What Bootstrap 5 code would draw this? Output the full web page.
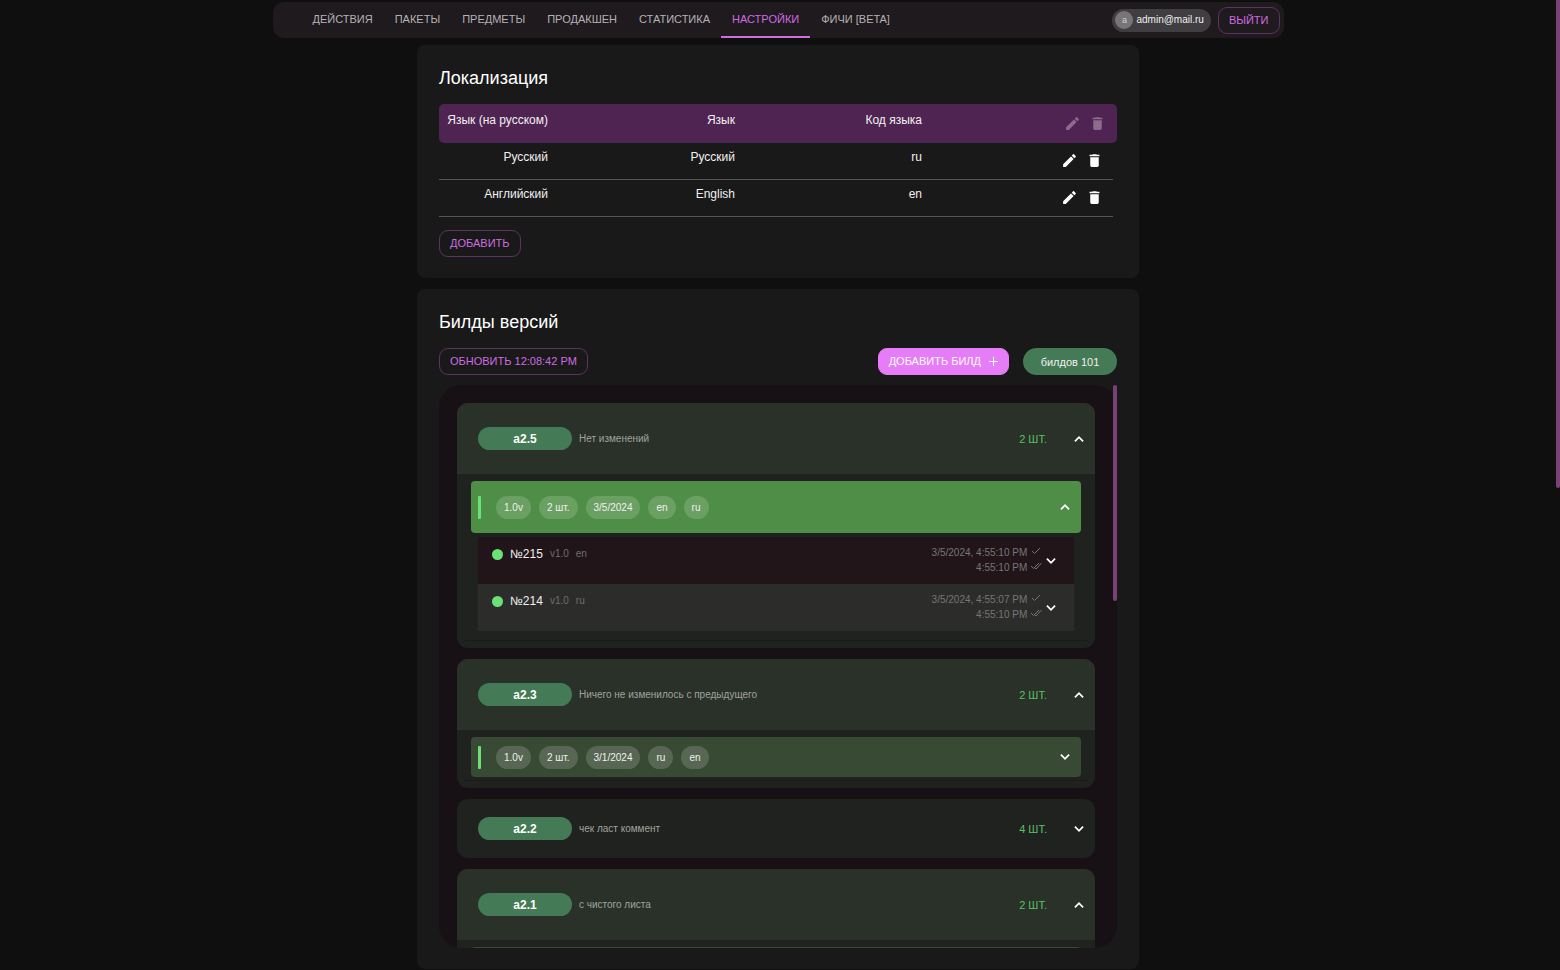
<!DOCTYPE html>
<html lang="ru" data-bs-theme="dark">
<head>
<meta charset="utf-8">
<meta name="viewport" content="width=device-width, initial-scale=1">
<title>Настройки</title>
<link href="https://cdn.jsdelivr.net/npm/bootstrap@5.3.0/dist/css/bootstrap.min.css" rel="stylesheet">
<style>
  :root { --accent: #d06be0; --ok: #6ae279; }
  body { background: #0f0f0f; color: #f0f0f0; font: 11px/16px "Liberation Sans", Arial, sans-serif; padding-right: 4px; }
  button { font-family: inherit; }
  .page-thumb { top: 0; right: 0; width: 4px; height: 488px; background: #7a4078; border-radius: 0 0 2px 2px; }

  .topbar { max-width: 1011px; height: 36px; margin-top: 2px; padding: 0 4px 0 29px; background: #1f1a1e; border-radius: 11px; }
  .topbar .nav-link { padding: 0 11px; height: 36px; line-height: 35px; font-size: 11px; color: #b5b2b4; border-bottom: 2px solid transparent; border-radius: 0; }
  .topbar .nav-link.active { color: var(--accent); border-color: var(--accent); }
  .user-chip { height: 23px; margin-right: 7px; padding: 0 7px 0 3px; gap: 3px; background: #403e40; border-radius: 12px; font-size: 10px; color: #f0f0f0; }
  .user-letter { width: 18px; height: 18px; border-radius: 50%; background: #777577; color: #d0d0d0; font-size: 9px; }

  .btn-line, .btn-fill { height: 27px; padding: 0 10px; font-size: 11px; line-height: 25px; border-radius: 9px; }
  .btn-line { color: var(--accent); border: 1px solid #5c3361; }
  .btn-line:hover { color: #e77cf8; border-color: var(--accent); }
  .btn-fill, .btn-fill:hover { color: #fff; background: #e77cf8; border: 1px solid #e77cf8; }
  .toolbar { gap: 14px; margin-bottom: 10px; }
  .total { width: 94px; height: 27px; background: #447a55; border-radius: 14px; }

  .pane { max-width: 722px; background: #191919; border-radius: 8px; padding: 22px 22px 21px; margin-top: 7px; }
  .pane + .pane { margin-top: 11px; }
  .pane h2 { font-size: 18px; line-height: 22px; margin: 0 0 15px; font-weight: 400; }

  .langs { table-layout: fixed; width: 100%; margin-bottom: 13px; font-size: 12px; text-align: right; }
  .langs th, .langs td { font-weight: 400; padding: 6px 8px 0 0; vertical-align: top; height: 37px; }
  .langs th { background: #502452; height: 39px; padding-top: 8px; white-space: nowrap; }
  .langs th:first-child { border-radius: 5px 0 0 5px; width: 117px; }
  .langs th:last-child { border-radius: 0 5px 5px 0; padding: 11px 11px 0 0; }
  .langs td { background: linear-gradient(#555, #555) 0 100% / 100% 1px no-repeat; }
  .langs td:last-child { background-size: calc(100% - 4px) 1px; padding: 9px 14px 0 0; }
  .icon-btn { border: 0; padding: 0; background: none; color: #fff; width: 17px; height: 17px; line-height: 0; margin-left: 8px; }
  .icon-btn:disabled { color: #8c6b8d; }
  .icon-btn svg { width: 17px; height: 17px; fill: currentColor; }

  .builds { height: 58vh; padding: 18px 22px 18px 18px; background: #171115; border-radius: 22px; overflow-y: auto; scrollbar-width: none; }
  .builds::-webkit-scrollbar { display: none; }
  .list-thumb { top: 0; right: 0; width: 4px; height: 216px; border-radius: 2px; background: #7a4078; }
  .version { background: #20221f; border-radius: 11px; overflow: hidden; margin-bottom: 11px; }
  .version-head { height: 59px; padding: 0 9px 0 21px; border: 0; background: none; color: inherit; font-size: 11px; }
  .version-head.opened { height: 71px; background: #293128; }
  .version-name { width: 94px; height: 23px; border-radius: 12px; background: #447a55; color: #fff; font-size: 12px; font-weight: 700; }
  .note { margin-left: 7px; color: #a0a39f; font-size: 10px; }
  .amount { color: #57c463; margin-right: 25px; }
  .chev { width: 14px; height: 14px; fill: none; stroke: #fff; stroke-width: 3; }
  .version-body { padding: 7px 14px 0; }
  .version-body::after { content: ""; display: block; height: 1px; margin: 0 -7px 7px; background: #1a1b19; }
  .rev { height: 40px; margin-bottom: 3px; padding: 0 9px 0 7px; gap: 8px; border: 0; border-radius: 4px; background: #384a33; color: #f0f0f0; font-size: 10px; }
  .rev.opened { height: 52px; margin-bottom: 4px; background: #4f8e46; }
  .rev-bar { width: 3px; height: 23px; margin-right: 7px; background: var(--ok); border-radius: 1px; }
  .pill { height: 23px; padding: 0 8px; border-radius: 12px; background: rgba(255, 255, 255, .16); line-height: 23px; }
  .build-row { height: 47px; margin: 0 7px; padding: 8px 16px 0 14px; background: #2c2d2b; }
  .build-row.fresh { background: #211519; }
  .build-row:last-child { margin-bottom: 9px; }
  .build-info { margin-top: 1px; }
  .dot { width: 11px; height: 11px; border-radius: 50%; background: var(--ok); margin-right: 7px; }
  .build-no { font-size: 12px; }
  .dim { color: #6f6d6d; margin-left: 7px; font-size: 10px; }
  .stamps { color: #777575; font-size: 10px; line-height: 15px; text-align: right; }
  .tick { width: 12px; height: 10px; fill: none; stroke: #777575; stroke-width: 1; vertical-align: 0; }
  .build-toggle { border: 0; background: none; padding: 0; line-height: 0; margin: 9px 0 0 2px; }
</style>
</head>
<body>
<svg class="d-none">
  <symbol id="pencil" viewBox="0 0 24 24"><path d="M3 17.25V21h3.75L17.81 9.94l-3.75-3.75L3 17.25zM20.71 7.04a1 1 0 0 0 0-1.41l-2.34-2.34a1 1 0 0 0-1.41 0l-1.83 1.83 3.75 3.75 1.83-1.83z"/></symbol>
  <symbol id="bin" viewBox="0 0 24 24"><path d="M6 19c0 1.100.9 2 2 2h8c1.100 0 2-.9 2-2V7.500H6V19zM19 4h-3.500l-1-1h-5l-1 1H5v2h14V4z"/></symbol>
  <symbol id="up" viewBox="0 0 24 24"><path d="M5 16l7-7 7 7"/></symbol>
  <symbol id="down" viewBox="0 0 24 24"><path d="M5 8l7 7 7-7"/></symbol>
  <symbol id="tick1" viewBox="0 0 12 10"><path d="M2 5l2.500 2.500L10 2"/></symbol>
  <symbol id="tick2" viewBox="0 0 12 10"><path d="M1 5l2.500 2.500L9 2M4.500 6.500L6 8l5.500-6"/></symbol>
</svg>
<div class="page-thumb position-fixed"></div>

<header class="topbar mx-auto d-flex align-items-center">
  <nav class="nav flex-nowrap me-auto">
    <a class="nav-link" href="#">ДЕЙСТВИЯ</a>
    <a class="nav-link" href="#">ПАКЕТЫ</a>
    <a class="nav-link" href="#">ПРЕДМЕТЫ</a>
    <a class="nav-link" href="#">ПРОДАКШЕН</a>
    <a class="nav-link" href="#">СТАТИСТИКА</a>
    <a class="nav-link active" href="#" aria-current="page">НАСТРОЙКИ</a>
    <a class="nav-link" href="#">ФИЧИ [BETA]</a>
  </nav>
  <span class="user-chip d-flex align-items-center"><span class="user-letter d-flex align-items-center justify-content-center">a</span>admin@mail.ru</span>
  <button type="button" class="btn btn-line">ВЫЙТИ</button>
</header>

<main>
  <section class="pane mx-auto">
    <h2>Локализация</h2>
    <table class="langs">
      <thead>
        <tr><th>Язык (на русском)</th><th>Язык</th><th>Код языка</th><th><div class="d-flex justify-content-end"><button class="icon-btn" disabled aria-label="Изменить"><svg><use href="#pencil"/></svg></button><button class="icon-btn" disabled aria-label="Удалить"><svg><use href="#bin"/></svg></button></div></th></tr>
      </thead>
      <tbody>
        <tr><td>Русский</td><td>Русский</td><td>ru</td><td><div class="d-flex justify-content-end"><button class="icon-btn" aria-label="Изменить"><svg><use href="#pencil"/></svg></button><button class="icon-btn" aria-label="Удалить"><svg><use href="#bin"/></svg></button></div></td></tr>
        <tr><td>Английский</td><td>English</td><td>en</td><td><div class="d-flex justify-content-end"><button class="icon-btn" aria-label="Изменить"><svg><use href="#pencil"/></svg></button><button class="icon-btn" aria-label="Удалить"><svg><use href="#bin"/></svg></button></div></td></tr>
      </tbody>
    </table>
    <button type="button" class="btn btn-line d-block">ДОБАВИТЬ</button>
  </section>

  <section class="pane mx-auto">
    <h2>Билды версий</h2>
    <div class="toolbar d-flex align-items-center">
      <button type="button" class="btn btn-line me-auto">ОБНОВИТЬ 12:08:42 PM</button>
      <button type="button" class="btn btn-fill d-flex align-items-center gap-2">ДОБАВИТЬ БИЛД <svg width="9" height="9" viewBox="0 0 9 9" stroke="#fff"><path d="M4.500 0v9M0 4.500h9"/></svg></button>
      <span class="total d-flex align-items-center justify-content-center">билдов 101</span>
    </div>
    <div class="position-relative">
      <div class="builds">
        <article class="version">
          <button class="version-head opened w-100 d-flex align-items-center" data-bs-toggle="collapse" data-bs-target="#v25"><span class="version-name d-flex align-items-center justify-content-center">a2.5</span><span class="note me-auto">Нет изменений</span><span class="amount">2 ШТ.</span><svg class="chev"><use href="#up"/></svg></button>
          <div id="v25" class="collapse show"><div class="version-body">
            <button class="rev opened w-100 d-flex align-items-center"><span class="rev-bar"></span><span class="pill">1.0v</span><span class="pill">2 шт.</span><span class="pill">3/5/2024</span><span class="pill">en</span><span class="pill">ru</span><svg class="chev ms-auto"><use href="#up"/></svg></button>
            <div>
              <div class="build-row fresh d-flex align-items-start">
                <div class="build-info d-flex align-items-center me-auto"><span class="dot"></span><span class="build-no">№215</span><span class="dim">v1.0</span><span class="dim">en</span></div>
                <div class="stamps">3/5/2024, 4:55:10 PM <svg class="tick"><use href="#tick1"/></svg><br>4:55:10 PM <svg class="tick"><use href="#tick2"/></svg></div>
                <button class="build-toggle" aria-label="Подробнее"><svg class="chev"><use href="#down"/></svg></button>
              </div>
              <div class="build-row d-flex align-items-start">
                <div class="build-info d-flex align-items-center me-auto"><span class="dot"></span><span class="build-no">№214</span><span class="dim">v1.0</span><span class="dim">ru</span></div>
                <div class="stamps">3/5/2024, 4:55:07 PM <svg class="tick"><use href="#tick1"/></svg><br>4:55:10 PM <svg class="tick"><use href="#tick2"/></svg></div>
                <button class="build-toggle" aria-label="Подробнее"><svg class="chev"><use href="#down"/></svg></button>
              </div>
            </div>
          </div></div>
        </article>
        <article class="version">
          <button class="version-head opened w-100 d-flex align-items-center" data-bs-toggle="collapse" data-bs-target="#v23"><span class="version-name d-flex align-items-center justify-content-center">a2.3</span><span class="note me-auto">Ничего не изменилось с предыдущего</span><span class="amount">2 ШТ.</span><svg class="chev"><use href="#up"/></svg></button>
          <div id="v23" class="collapse show"><div class="version-body">
            <button class="rev w-100 d-flex align-items-center"><span class="rev-bar"></span><span class="pill">1.0v</span><span class="pill">2 шт.</span><span class="pill">3/1/2024</span><span class="pill">ru</span><span class="pill">en</span><svg class="chev ms-auto"><use href="#down"/></svg></button>
          </div></div>
        </article>
        <article class="version">
          <button class="version-head w-100 d-flex align-items-center"><span class="version-name d-flex align-items-center justify-content-center">a2.2</span><span class="note me-auto">чек ласт коммент</span><span class="amount">4 ШТ.</span><svg class="chev"><use href="#down"/></svg></button>
        </article>
        <article class="version">
          <button class="version-head opened w-100 d-flex align-items-center" data-bs-toggle="collapse" data-bs-target="#v21"><span class="version-name d-flex align-items-center justify-content-center">a2.1</span><span class="note me-auto">с чистого листа</span><span class="amount">2 ШТ.</span><svg class="chev"><use href="#up"/></svg></button>
          <div id="v21" class="collapse show"><div class="version-body">
            <button class="rev w-100 d-flex align-items-center" aria-label="Ревизия"><span class="rev-bar"></span><svg class="chev ms-auto"><use href="#down"/></svg></button>
          </div></div>
        </article>
      </div>
      <div class="list-thumb position-absolute"></div>
    </div>
  </section>
</main>
<script src="https://cdn.jsdelivr.net/npm/bootstrap@5.3.0/dist/js/bootstrap.bundle.min.js"></script>
</body>
</html>
